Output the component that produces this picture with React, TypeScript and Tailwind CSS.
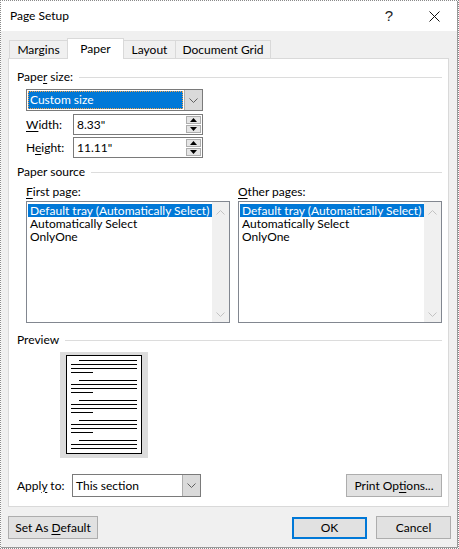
import React from 'react';

const U = ({ children }: { children: React.ReactNode }) => (
  <span className="underline underline-offset-[2px] decoration-1">{children}</span>
);

const ChevronDown = ({ color = '#606060' }: { color?: string }) => (
  <svg width="9" height="5" viewBox="0 0 9 5">
    <polyline points="0.5,0.5 4.5,4.5 8.5,0.5" fill="none" stroke={color} strokeWidth="1" />
  </svg>
);

const ChevronUp = ({ color = '#c2c2c2' }: { color?: string }) => (
  <svg width="9" height="5" viewBox="0 0 9 5">
    <polyline points="0.5,4.5 4.5,0.5 8.5,4.5" fill="none" stroke={color} strokeWidth="1" />
  </svg>
);

const GroupHeader = ({ children, className = '' }: { children: React.ReactNode; className?: string }) => (
  <div className={`flex h-[16px] items-center ${className}`}>
    <span className="leading-[16px]">{children}</span>
    <div className="ml-[6px] h-px flex-1 bg-[#dcdcdc]" />
  </div>
);

const Spin = ({ value }: { value: string }) => (
  <div className="flex h-[21px] w-[130px] border border-[#7a7a7a] bg-white">
    <div className="flex-1 pl-[3px] leading-[19px]">{value}</div>
    <div className="flex w-[16px] flex-col gap-[1px] py-[1px] pr-[1px]">
      <div className="flex flex-1 items-center justify-center border border-[#adadad] bg-[#e5e5e5]">
        <svg width="7" height="4" viewBox="0 0 7 4"><polygon points="0,4 3.5,0 7,4" fill="#000" /></svg>
      </div>
      <div className="flex flex-1 items-center justify-center border border-[#adadad] bg-[#e5e5e5]">
        <svg width="7" height="4" viewBox="0 0 7 4"><polygon points="0,0 3.5,4 7,0" fill="#000" /></svg>
      </div>
    </div>
  </div>
);

const ListBox = () => (
  <div className="flex h-[122px] w-[204px] border border-[#828790] bg-white">
    <div className="flex-1 whitespace-nowrap pl-[1px] pt-[2px]">
      <div className="h-[13px] bg-[#0078d7] pl-[2px] leading-[13px] text-white">Default tray (Automatically Select)</div>
      <div className="h-[13px] pl-[2px] leading-[13px]">Automatically Select</div>
      <div className="h-[13px] pl-[2px] leading-[13px]">OnlyOne</div>
    </div>
    <div className="flex w-[17px] flex-col items-center justify-between bg-[#f0f0f0] pb-[5px] pt-[8px]">
      <ChevronUp />
      <svg width="9" height="5" viewBox="0 0 9 5">
        <polyline points="0.5,0.5 4.5,4.5 8.5,0.5" fill="none" stroke="#c2c2c2" strokeWidth="1" />
      </svg>
    </div>
  </div>
);

const PageLines = ({ last }: { last?: boolean }) => (
  <div className="flex flex-col gap-[3px]">
    <div className="ml-[8px] h-px bg-black" />
    <div className="h-px bg-black" />
    <div className="h-px bg-black" />
    {!last && <div className="h-px w-[22px] bg-black" />}
  </div>
);

const Button = ({ children, className = '' }: { children: React.ReactNode; className?: string }) => (
  <div className={`flex h-[23px] items-center justify-center border border-[#adadad] bg-[#e1e1e1] ${className}`}>
    <span>{children}</span>
  </div>
);

export default function App() {
  const tabs = [
    { label: 'Margins', w: 'w-[59px]' },
    { label: 'Paper', w: 'w-[57px]', active: true },
    { label: 'Layout', w: 'w-[53px]' },
    { label: 'Document Grid', w: 'w-[96px]' },
  ];

  return (
    <div className="h-[549px] w-[459px] border border-dotted border-[#8a8a8a] bg-white font-['Lato',sans-serif] text-[12px] text-black">
      <div className="flex h-full flex-col border-b border-r border-[#9a9a9a]">
        {/* title bar */}
        <div className="flex h-[30px] items-center bg-white pl-[9px]">
          <span className="text-[12px]">Page Setup</span>
          <span className="ml-auto mr-[36px] font-['Liberation_Sans',sans-serif] text-[15px] text-[#222]">?</span>
          <svg width="11" height="11" viewBox="0 0 11 11" className="mr-[17px]">
            <path d="M0.5 0.5 L10.5 10.5 M10.5 0.5 L0.5 10.5" stroke="#111" strokeWidth="1" />
          </svg>
        </div>

        <div className="flex flex-1 flex-col bg-[#f0f0f0] pl-[7px]">
          {/* tabs */}
          <div className="mt-[7px] flex h-[21px] items-end pl-[1px]">
            {tabs.map((t) =>
              t.active ? (
                <div
                  key={t.label}
                  className={`relative z-10 -ml-px flex h-[21px] items-center justify-center border border-b-0 border-[#d9d9d9] bg-white pb-[1px] ${t.w}`}
                >
                  {t.label}
                </div>
              ) : (
                <div
                  key={t.label}
                  className={`-ml-px flex h-[19px] items-center justify-center border border-b-0 border-[#d9d9d9] bg-[#f0f0f0] first:ml-0 ${t.w}`}
                >
                  {t.label}
                </div>
              )
            )}
          </div>

          {/* panel */}
          <div className="-mt-px flex h-[449px] w-[441px] flex-col border border-[#d9d9d9] bg-white pl-[8px] pr-[6px]">
            <GroupHeader className="mt-[10px]">
              Pape<U>r</U> size:
            </GroupHeader>

            <div className="ml-[9px] mt-[4px] flex h-[22px] w-[177px] border border-[#7a7a7a] bg-white">
              <div className="flex-1 p-[1px]">
                <div className="h-full bg-[#0078d7] pl-[2px] leading-[18px] text-white outline-1 outline-dotted -outline-offset-1 outline-[#f3a34a]">
                  Custom size
                </div>
              </div>
              <div className="flex w-[18px] items-center justify-center border-l border-[#adadad] bg-[#dadada]">
                <ChevronDown />
              </div>
            </div>

            <div className="ml-[9px] mt-[3px] flex items-center">
              <span className="w-[47px]">
                <U>W</U>idth:
              </span>
              <Spin value={'8.33"'} />
            </div>
            <div className="ml-[9px] mt-[2px] flex items-center">
              <span className="w-[47px]">
                H<U>e</U>ight:
              </span>
              <Spin value={'11.11"'} />
            </div>

            <GroupHeader className="mt-[6px]">Paper source</GroupHeader>

            <div className="ml-[9px] mt-[4px] flex gap-[8px]">
              <div className="flex flex-col">
                <div className="h-[16px] leading-[16px]">
                  <U>F</U>irst page:
                </div>
                <div className="mt-[1px]">
                  <ListBox />
                </div>
              </div>
              <div className="flex flex-col">
                <div className="h-[16px] leading-[16px]">
                  <U>O</U>ther pages:
                </div>
                <div className="mt-[1px]">
                  <ListBox />
                </div>
              </div>
            </div>

            <GroupHeader className="mt-[9px]">Preview</GroupHeader>

            <div className="ml-[43px] mt-[4px] h-[106px] w-[88px] bg-[#dcdcdc] pl-[6px] pt-[3px]">
              <div className="flex h-[99px] w-[76px] flex-col gap-[7px] border border-black bg-white px-[4px] pt-[4px]">
                <PageLines />
                <PageLines />
                <PageLines />
                <PageLines />
                <PageLines last />
              </div>
            </div>

            <div className="mt-[16px] flex items-center">
              <span className="w-[55px]">
                Appl<U>y</U> to:
              </span>
              <div className="flex h-[23px] w-[129px] border border-[#7a7a7a] bg-white">
                <div className="flex-1 pl-[3px] leading-[21px]">This section</div>
                <div className="flex w-[18px] items-center justify-center border-l border-[#adadad] bg-[#dadada]">
                  <ChevronDown />
                </div>
              </div>
              <Button className="ml-auto w-[96px]">
                Print Op<U>t</U>ions...
              </Button>
            </div>
          </div>

          {/* footer */}
          <div className="mt-[9px] flex items-center pr-[6px]">
            <Button className="w-[90px]">
              Set As <U>D</U>efault
            </Button>
            <div className="ml-auto flex h-[22px] w-[75px] items-center justify-center border-2 border-[#0078d7] bg-[#e1e1e1]">
              OK
            </div>
            <Button className="ml-[9px] h-[22px] w-[75px]">Cancel</Button>
          </div>
        </div>
      </div>
    </div>
  );
}
